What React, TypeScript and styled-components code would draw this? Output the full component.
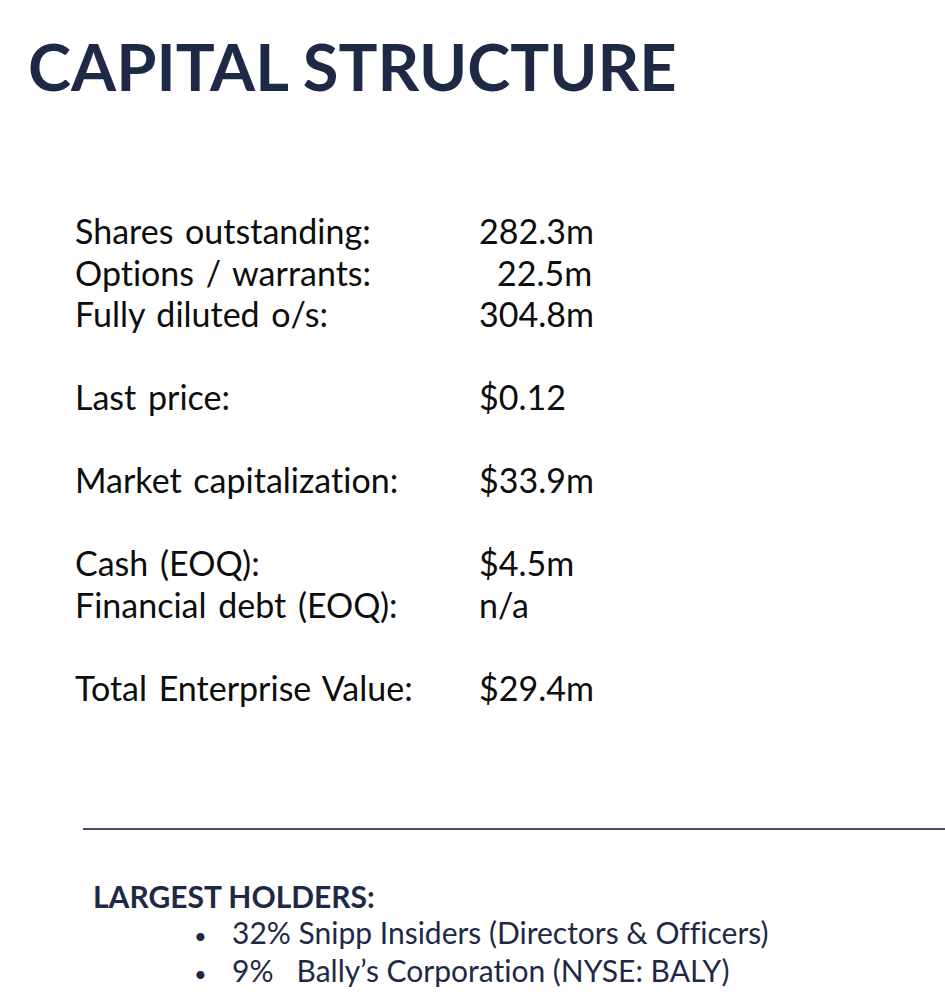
import React from "react";
import styled, { createGlobalStyle } from "styled-components";

const Global = createGlobalStyle`
  html, body { margin: 0; padding: 0; background: #ffffff; }
  body { font-family: Lato, "Open Sans", sans-serif; }
`;

const Page = styled.div`
  width: 945px;
  height: 1006px;
  overflow: hidden;
  background: #fff;
  display: flex;
  flex-direction: column;
`;

const Title = styled.h1`
  margin: 0;
  padding: 26px 0 0 28px;
  font-family: Lato, sans-serif;
  font-weight: 700;
  font-size: 65px;
  line-height: 80px;
  color: #1e2a45;
`;

const Table = styled.div`
  margin: 104px 0 0 75px;
  display: grid;
  grid-template-columns: 404px auto;
  grid-auto-rows: 41.5px;
  font-family: Lato, sans-serif;
  font-size: 34px;
  word-spacing: 3px;
  font-variant-ligatures: none;
  color: #0d0d0d;
  align-items: center;
`;

const Label = styled.div`
  white-space: pre;
`;

const Value = styled.div<{ $indent?: number }>`
  white-space: pre;
  padding-left: ${(p) => p.$indent ?? 0}px;
`;

const Spacer = styled.div`
  grid-column: 1 / span 2;
`;

const Rule = styled.div`
  margin: 120px 0 0 83px;
  height: 2px;
  background: #4a5068;
`;

const Holders = styled.div`
  margin: 48px 0 0 93px;
  font-family: Lato, sans-serif;
  color: #1e2a45;
  font-variant-ligatures: none;
`;

const HoldersTitle = styled.div`
  font-weight: 700;
  font-size: 30px;
  line-height: 37px;
`;

const List = styled.ul`
  list-style: none;
  margin: 0;
  padding: 0 0 0 101px;
`;

const Item = styled.li`
  display: flex;
  align-items: baseline;
  font-size: 30px;
  line-height: 35px;
`;

const Bullet = styled.span`
  width: 38px;
  flex: none;
  font-size: 22px;
`;

const rows: ([string, string, number] | null)[] = [
  ["Shares outstanding:", "282.3m", 0],
  ["Options / warrants:", "22.5m", 18],
  ["Fully diluted o/s:", "304.8m", 0],
  null,
  ["Last price:", "$0.12", 0],
  null,
  ["Market capitalization:", "$33.9m", 0],
  null,
  ["Cash (EOQ):", "$4.5m", 0],
  ["Financial debt (EOQ):", "n/a", 0],
  null,
  ["Total Enterprise Value:", "$29.4m", 0],
];

export default function App() {
  return (
    <Page>
      <Global />
      <Title>CAPITAL STRUCTURE</Title>
      <Table>
        {rows.map((r, i) =>
          r ? (
            <React.Fragment key={i}>
              <Label>{r[0]}</Label>
              <Value $indent={r[2]}>{r[1]}</Value>
            </React.Fragment>
          ) : (
            <Spacer key={i} />
          )
        )}
      </Table>
      <Rule />
      <Holders>
        <HoldersTitle>LARGEST HOLDERS:</HoldersTitle>
        <List>
          <Item>
            <Bullet>•</Bullet>
            <span>32% Snipp Insiders (Directors &amp; Officers)</span>
          </Item>
          <Item>
            <Bullet>•</Bullet>
            <span style={{ whiteSpace: "pre" }}>9%   Bally’s Corporation (NYSE: BALY)</span>
          </Item>
        </List>
      </Holders>
    </Page>
  );
}
